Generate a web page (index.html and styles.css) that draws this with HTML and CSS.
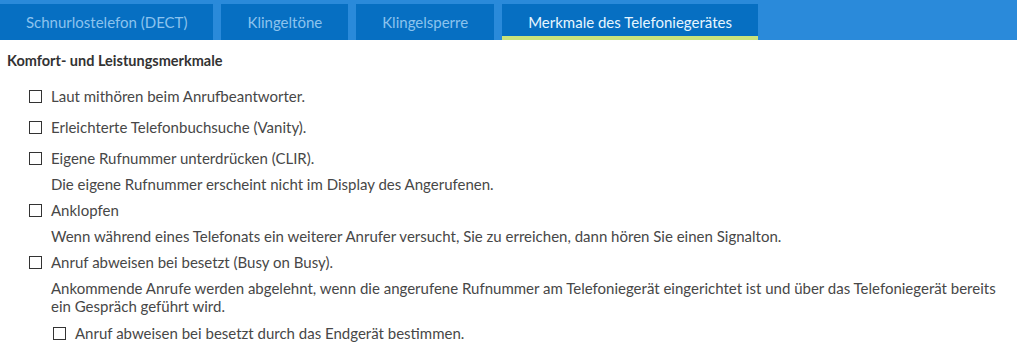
FILE: index.html
```html
<!DOCTYPE html>
<html lang="de">
<head>
    <meta charset="UTF-8">
    <title>Telefoniegerät</title>
    <link rel="stylesheet" href="styles.css">
</head>
<body>

    <nav class="tab-bar">
        <a class="tab" href="#">Schnurlostelefon (DECT)</a>
        <a class="tab" href="#">Klingeltöne</a>
        <a class="tab" href="#">Klingelsperre</a>
        <a class="tab active" href="#">Merkmale des Telefoniegerätes</a>
    </nav>

    <div class="content">
        <h4 class="section-title">Komfort- und Leistungsmerkmale</h4>

        <div class="option">
            <label><input type="checkbox"> Laut mithören beim Anrufbeantworter.</label>
        </div>
        <div class="option">
            <label><input type="checkbox"> Erleichterte Telefonbuchsuche (Vanity).</label>
        </div>
        <div class="option with-hint">
            <label><input type="checkbox"> Eigene Rufnummer unterdrücken (CLIR).</label>
            <p class="hint">Die eigene Rufnummer erscheint nicht im Display des Angerufenen.</p>
        </div>
        <div class="option with-hint">
            <label><input type="checkbox"> Anklopfen</label>
            <p class="hint">Wenn während eines Telefonats ein weiterer Anrufer versucht, Sie zu erreichen, dann hören Sie einen Signalton.</p>
        </div>
        <div class="option with-hint">
            <label><input type="checkbox"> Anruf abweisen bei besetzt (Busy on Busy).</label>
            <p class="hint">Ankommende Anrufe werden abgelehnt, wenn die angerufene Rufnummer am Telefoniegerät eingerichtet ist und über das Telefoniegerät bereits ein Gespräch geführt wird.</p>
            <div class="option sub">
                <label><input type="checkbox"> Anruf abweisen bei besetzt durch das Endgerät bestimmen.</label>
            </div>
        </div>
    </div>

</body>
</html>
```

FILE: styles.css
```css
body {
    margin: 0;
    font-family: 'Source Sans Pro', Lato, 'Liberation Sans', sans-serif;
    font-size: 15px;
    color: #474747;
    background-color: #fff;
}

.tab-bar {
    display: flex;
    gap: 8px;
    height: 40px;
    padding-top: 4px;
    box-sizing: border-box;
    background-color: #2a8ada;
}

.tab {
    display: flex;
    align-items: center;
    justify-content: center;
    padding: 3px 26px 0;
    background-color: #066fc2;
    color: #8cc3ee;
    font-size: 15px;
    text-decoration: none;
    box-sizing: border-box;
    border-bottom: 4px solid transparent;
}

.tab.active {
    color: #e6f6ff;
    border-bottom-color: #c9e37c;
}

.content {
    padding: 0 7px;
}

.section-title {
    margin: 12px 0 18px;
    font-size: 14.5px;
    font-weight: bold;
    color: #333;
}

.option {
    padding-left: 22px;
    margin-bottom: 13px;
}

.option.with-hint {
    margin-bottom: 8px;
}

.option label {
    display: flex;
    align-items: center;
    line-height: 18px;
}

.option input {
    -webkit-appearance: none;
    appearance: none;
    width: 13px;
    height: 13px;
    margin: 0 9px 0 0;
    border: 1px solid #333;
    background: #fff;
    box-sizing: border-box;
}

.hint {
    margin: 8px 0 0 22px;
    line-height: 18px;
}

.option.sub {
    padding-left: 24px;
    margin-top: 9px;
}
```
